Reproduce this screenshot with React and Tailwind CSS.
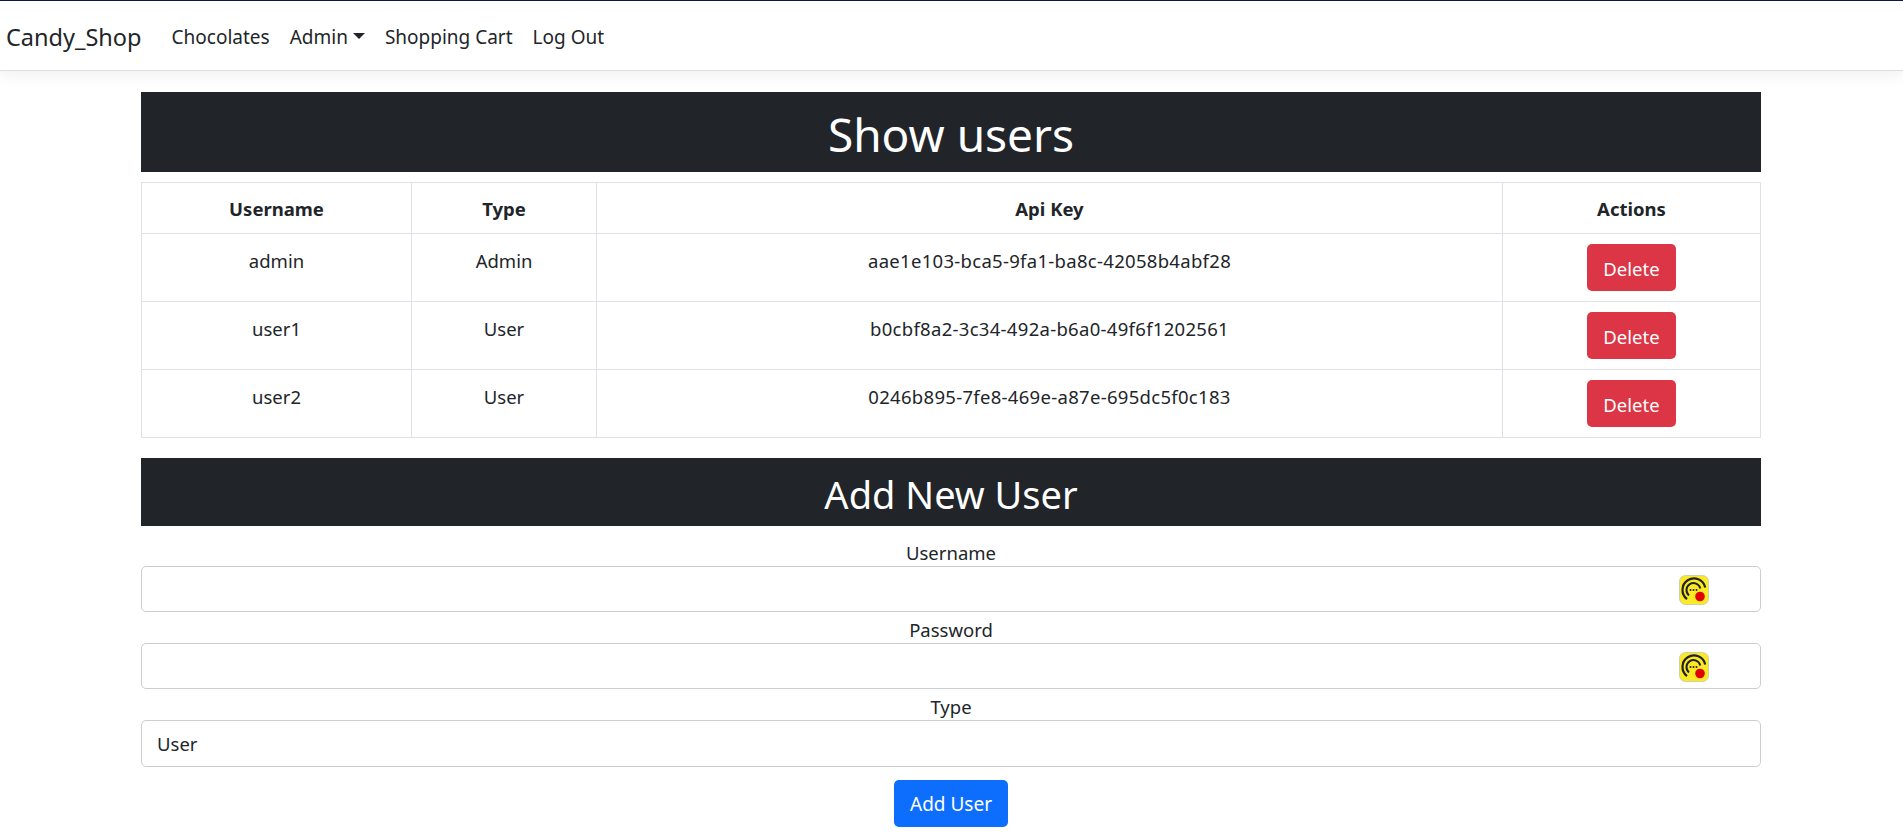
import React from "react";

const users = [
  { username: "admin", type: "Admin", apiKey: "aae1e103-bca5-9fa1-ba8c-42058b4abf28" },
  { username: "user1", type: "User", apiKey: "b0cbf8a2-3c34-492a-b6a0-49f6f1202561" },
  { username: "user2", type: "User", apiKey: "0246b895-7fe8-469e-a87e-695dc5f0c183" },
];

const FONT = "font-['Noto_Sans','Open_Sans',sans-serif]";

const ExtensionBadge = () => (
  <svg
    viewBox="0 0 30 30"
    className="absolute right-[52px] top-[9px] w-[30px] h-[30px]"
  >
    <rect x="0.5" y="0.5" width="29" height="29" rx="6" fill="#fbe925" stroke="#cfcfa8" />
    <path d="M8 24.1 A11.5 11.5 0 1 1 26.2 12.4" fill="none" stroke="#222" strokeWidth="2.2" />
    <path d="M10 20.4 A7 7 0 1 1 21.3 13.4" fill="none" stroke="#222" strokeWidth="2" />
    <circle cx="11.5" cy="15" r="1" fill="#222" />
    <circle cx="14.5" cy="15" r="1" fill="#222" />
    <circle cx="17.5" cy="15" r="1" fill="#222" />
    <circle cx="21" cy="21.5" r="4.8" fill="#e00000" />
  </svg>
);

const Field = ({ label, children }) => (
  <div>
    <div className="h-[31px] pt-[4px] flex items-center justify-center text-[18.5px] leading-[24px]">
      {label}
    </div>
    {children}
  </div>
);

const TextInput = () => (
  <div className="relative">
    <input className="w-full h-[46px] border border-[#c8ced4] rounded-[5px] bg-white px-[15px] outline-none" />
    <ExtensionBadge />
  </div>
);

export default function App() {
  return (
    <div className={`${FONT} min-h-[835px] bg-white text-[#212529] text-[18.5px]`}>
      <nav className="h-[71px] border-t border-b border-t-[#0b1a4a] border-b-[#dfdfdf] bg-white shadow-[0_6px_12px_rgba(0,0,0,0.05)] flex items-center pl-[6px] pt-[4px]">
        <a className="text-[23.5px] mr-[30px]">Candy_Shop</a>
        <div className="flex items-center gap-[20px] text-[19px]">
          <a>Chocolates</a>
          <a className="flex items-center gap-[5px]">
            Admin
            <span className="w-0 h-0 -mt-[3px] border-x-[6px] border-x-transparent border-t-[6px] border-t-[#212529]" />
          </a>
          <a>Shopping Cart</a>
          <a>Log Out</a>
        </div>
      </nav>

      <main className="mx-[141px] w-[1620px] pt-[21px]">
        <h1 className="h-[80px] pt-[4px] bg-[#212529] text-white text-[46px] flex items-center justify-center">
          Show users
        </h1>

        <table className="w-full mt-[10px] table-fixed border-collapse text-center">
          <thead>
            <tr className="h-[51px] font-bold">
              <th className="w-[270px] border border-[#dee2e6] pt-[2px]">Username</th>
              <th className="w-[185px] border border-[#dee2e6] pt-[2px]">Type</th>
              <th className="border border-[#dee2e6] pt-[2px]">Api Key</th>
              <th className="w-[258px] border border-[#dee2e6] pt-[2px]">Actions</th>
            </tr>
          </thead>
          <tbody>
            {users.map((user) => (
              <tr key={user.username} className="h-[68px]">
                <td className="border border-[#dee2e6] align-top pt-[13px]">{user.username}</td>
                <td className="border border-[#dee2e6] align-top pt-[13px]">{user.type}</td>
                <td className="border border-[#dee2e6] align-top pt-[13px] tracking-[0.3px]">{user.apiKey}</td>
                <td className="border border-[#dee2e6] align-middle">
                  <button className="w-[89px] h-[47px] pt-[2px] bg-[#dc3545] text-white rounded-[5px]">
                    Delete
                  </button>
                </td>
              </tr>
            ))}
          </tbody>
        </table>

        <h2 className="h-[68px] pt-[5px] mt-[20px] bg-[#212529] text-white text-[38px] flex items-center justify-center">
          Add New User
        </h2>

        <form className="pt-[9px]">
          <Field label="Username">
            <TextInput />
          </Field>
          <Field label="Password">
            <TextInput />
          </Field>
          <Field label="Type">
            <div className="h-[47px] flex items-center border border-[#c8ced4] rounded-[5px] bg-white px-[15px]">
              User
            </div>
          </Field>
          <div className="flex justify-center mt-[13px]">
            <button className="w-[114px] h-[47px] pt-[2px] bg-[#0d6efd] text-white text-[19px] rounded-[5px]">
              Add User
            </button>
          </div>
        </form>
      </main>
    </div>
  );
}
